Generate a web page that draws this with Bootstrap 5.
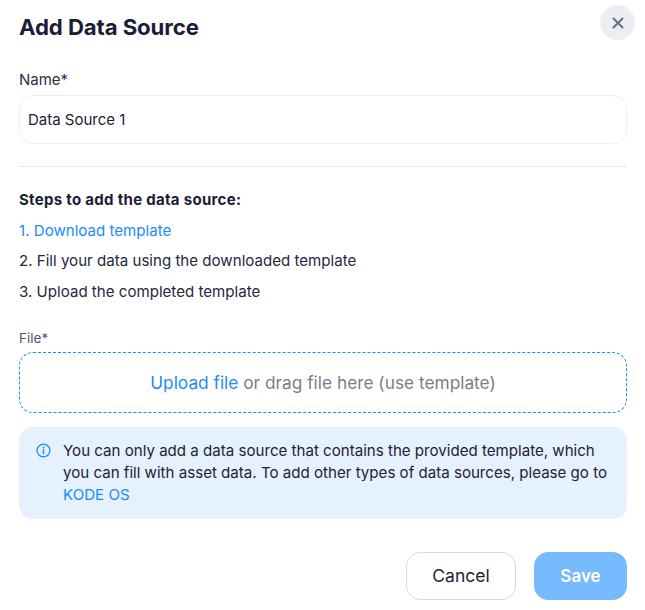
<!DOCTYPE html>
<html lang="en">
<head>
<meta charset="utf-8">
<title>Add Data Source</title>
<link href="https://cdn.jsdelivr.net/npm/bootstrap@5.3.0/dist/css/bootstrap.min.css" rel="stylesheet">
<style>
html,body{height:610px;overflow:hidden;background:#fff;}
body{font-family:Inter,"Liberation Sans",sans-serif;color:#1b1d36;}
.dlg{padding:0 18px 0 19px;position:relative;height:610px;}
.dlg-head{height:70px;padding-top:13px;}
.dlg-title{font-size:22.2px;font-weight:700;line-height:28px;margin:0;color:#1b1d36;letter-spacing:-.1px;}
.close-x{position:absolute;top:5px;right:10px;width:35px;height:35px;border:0;padding:0;border-radius:50%;background:#eceef3;display:flex;align-items:center;justify-content:center;}
.fld-label{font-size:15px;line-height:20px;margin-bottom:5px;color:#2c2e3f;}
.name-input.form-control{height:49px;border:1px solid #eceef2;border-radius:14px;font-size:15px;padding:0 8px;color:#1b1d36;box-shadow:none;}
.sep{margin:22px 0 0;border:0;border-top:1px solid #e9eaee;opacity:1;}
.steps-title{font-size:15px;font-weight:700;line-height:20px;margin-top:23px;letter-spacing:.3px;}
.step{font-size:15.1px;line-height:20px;margin-top:10.5px;color:#26283c;}
.blue{color:#1a8cff;text-decoration:none;}
.file-label{font-size:13.5px;line-height:18px;margin-top:27px;color:#55576a;}
.drop{height:61px;margin-top:5.5px;border:1px dashed #1a8cff;border-radius:14px;font-size:17.3px;color:#7b7d8c;}
.note{margin-top:13.5px;height:92px;background:#e5f1fd;border-radius:14px;padding:13px 10px 0 17px;font-size:15.1px;line-height:22px;color:#1f2136;}
.note svg{flex:none;margin:3.5px 12px 0 0;}
.foot{margin-top:33px;}
.b-cancel.btn,.b-save.btn{height:48px;border-radius:14px;font-size:17.5px;padding:2px 0 0;}
.b-cancel.btn{width:110px;background:#fff;border:1px solid #d9d9dc;color:#1b1d36;}
.b-save.btn{width:93px;background:#76baff;border:1px solid #76baff;color:#fff;font-weight:600;opacity:1;font-size:17px;}
.gap-save{gap:18px;}
</style>
</head>
<body>
<div class="dlg">
  <div class="dlg-head"><h1 class="dlg-title">Add Data Source</h1></div>
  <button type="button" class="close-x" aria-label="Close">
    <svg width="12" height="12" viewBox="0 0 12 12"><path d="M1.5 1.5l9 9M10.5 1.5l-9 9" stroke="#64708f" stroke-width="2" stroke-linecap="round" fill="none"/></svg>
  </button>
  <div class="fld-label">Name*</div>
  <input class="form-control name-input" type="text" value="Data Source 1">
  <hr class="sep">
  <div class="steps-title">Steps to add the data source:</div>
  <div class="step"><a class="blue" href="#">1. Download template</a></div>
  <div class="step">2. Fill your data using the downloaded template</div>
  <div class="step">3. Upload the completed template</div>
  <div class="file-label">File*</div>
  <div class="drop d-flex align-items-center justify-content-center"><span><a class="blue" href="#">Upload file</a> or drag file here (use template)</span></div>
  <div class="note d-flex">
    <svg width="15" height="15" viewBox="0 0 15 15" fill="none"><circle cx="7.5" cy="7.5" r="6.4" stroke="#1a8cff" stroke-width="1.3"/><path d="M7.5 6.8v4" stroke="#1a8cff" stroke-width="1.4" stroke-linecap="round"/><circle cx="7.5" cy="4.5" r=".9" fill="#1a8cff"/></svg>
    <div>You can only add a data source that contains the provided template, which you can fill with asset data. To add other types of data sources, please go to <a class="blue" href="#">KODE OS</a></div>
  </div>
  <div class="foot d-flex justify-content-end gap-save">
    <button type="button" class="btn b-cancel">Cancel</button>
    <button type="button" class="btn b-save">Save</button>
  </div>
</div>
<script src="https://cdn.jsdelivr.net/npm/bootstrap@5.3.0/dist/js/bootstrap.bundle.min.js"></script>
</body>
</html>
